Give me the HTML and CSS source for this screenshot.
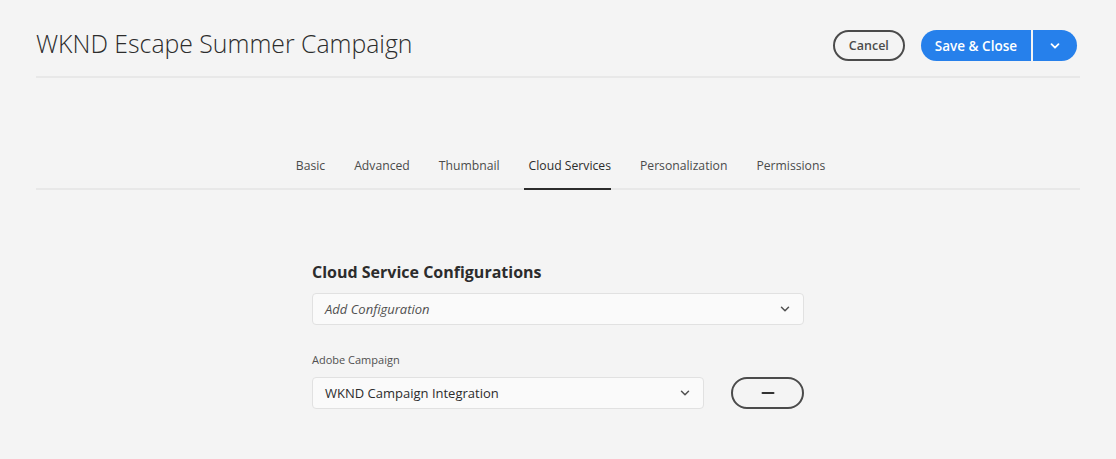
FILE: index.html
```html
<!DOCTYPE html>
<html lang="en">
<head>
<meta charset="utf-8">
<title>WKND Escape Summer Campaign</title>
<link rel="stylesheet" href="styles.css">
</head>
<body>
<div class="page">
  <header class="header">
    <h1 class="title">WKND Escape Summer Campaign</h1>
    <div class="actions">
      <button class="btn-quiet">Cancel</button>
      <div class="split">
        <button class="btn-cta">Save &amp; Close</button>
        <button class="btn-cta btn-more" aria-label="More">
          <svg width="10" height="10" viewBox="0 0 10 10"><path d="M1.5 3.2 L5 6.7 L8.5 3.2" fill="none" stroke="#fff" stroke-width="1.8" stroke-linecap="round" stroke-linejoin="round"/></svg>
        </button>
      </div>
    </div>
  </header>

  <nav class="tabs">
    <span class="tab">Basic</span>
    <span class="tab">Advanced</span>
    <span class="tab">Thumbnail</span>
    <span class="tab selected">Cloud Services</span>
    <span class="tab">Personalization</span>
    <span class="tab">Permissions</span>
  </nav>

  <section class="form">
    <h2 class="form-title">Cloud Service Configurations</h2>
    <div class="select full">
      <span class="placeholder">Add Configuration</span>
      <svg class="chev" width="10" height="10" viewBox="0 0 10 10"><path d="M1.5 3.2 L5 6.7 L8.5 3.2" fill="none" stroke="#505050" stroke-width="1.5" stroke-linecap="round" stroke-linejoin="round"/></svg>
    </div>

    <label class="field-label">Adobe Campaign</label>
    <div class="row">
      <div class="select half">
        <span class="value">WKND Campaign Integration</span>
        <svg class="chev" width="10" height="10" viewBox="0 0 10 10"><path d="M1.5 3.2 L5 6.7 L8.5 3.2" fill="none" stroke="#505050" stroke-width="1.5" stroke-linecap="round" stroke-linejoin="round"/></svg>
      </div>
      <button class="btn-remove" aria-label="Remove">
        <svg width="14" height="4" viewBox="0 0 14 4"><rect x="0.5" y="1" width="13" height="2" rx="1" fill="#323232"/></svg>
      </button>
    </div>
  </section>
</div>
</body>
</html>
```

FILE: styles.css
```css
html, body {
  margin: 0;
  padding: 0;
  background: #f4f4f4;
}
body {
  font-family: "Open Sans", "Noto Sans", sans-serif;
  color: #2c2c2c;
}
.page {
  padding: 0 36px;
}
.header {
  display: flex;
  align-items: flex-start;
  justify-content: space-between;
  height: 78px;
  box-sizing: border-box;
  padding-top: 30px;
  border-bottom: 2px solid #e8e8e8;
}
.title {
  margin: 0;
  margin-top: -3px;
  font-size: 24.8px;
  line-height: 32px;
  font-weight: 300;
  color: #2c2c2c;
}
.actions {
  display: flex;
  align-items: center;
  gap: 16px;
  margin-right: 3px;
}
button {
  font-family: inherit;
  cursor: pointer;
}
.btn-quiet {
  height: 31px;
  padding: 0 14px;
  border: 2px solid #4b4b4b;
  border-radius: 16px;
  background: transparent;
  color: #4b4b4b;
  font-size: 12.5px;
  font-weight: 600;
}
.split {
  display: flex;
  gap: 2px;
}
.btn-cta {
  height: 31px;
  border: none;
  background: #2680eb;
  color: #fff;
  font-size: 13.5px;
  font-weight: 600;
  padding: 0 14px;
  border-radius: 16px 0 0 16px;
}
.btn-more {
  width: 44px;
  padding: 0;
  border-radius: 0 16px 16px 0;
  display: flex;
  align-items: center;
  justify-content: center;
}
.tabs {
  margin-top: 65px;
  display: flex;
  justify-content: center;
  gap: 29px;
  border-bottom: 2px solid #e8e8e8;
  padding-left: 5px;
}
.tab {
  position: relative;
  font-size: 12.2px;
  color: #4b4b4b;
  line-height: 45px;
}
.tab.selected {
  color: #2c2c2c;
  margin-left: -5px;
  padding-left: 5px;
}
.tab.selected::after {
  content: "";
  position: absolute;
  left: 0;
  right: 0;
  bottom: -2px;
  height: 2px;
  background: #2c2c2c;
}
.form {
  width: 492px;
  margin: 71px auto 0;
}
.form-title {
  margin: 0 0 10px;
  font-size: 16px;
  font-weight: 700;
  line-height: 22px;
  color: #2c2c2c;
}
.select {
  box-sizing: border-box;
  height: 32px;
  border: 1px solid #e1e1e1;
  border-radius: 4px;
  background: #fafafa;
  display: flex;
  align-items: center;
  justify-content: space-between;
  padding: 0 13px 0 12px;
  font-size: 13px;
}
.full {
  width: 492px;
}
.half {
  width: 393px;
}
.placeholder {
  font-style: italic;
  color: #505050;
}
.value {
  color: #2c2c2c;
}
.chev {
  flex: none;
}
.field-label {
  display: block;
  margin-top: 27px;
  margin-bottom: 9px;
  font-size: 11px;
  color: #505050;
  line-height: 16px;
}
.row {
  display: flex;
  align-items: center;
  gap: 27px;
}
.btn-remove {
  box-sizing: border-box;
  width: 73px;
  height: 32px;
  border: 2px solid #4b4b4b;
  border-radius: 16px;
  background: transparent;
  display: flex;
  align-items: center;
  justify-content: center;
  padding: 0;
}
```
